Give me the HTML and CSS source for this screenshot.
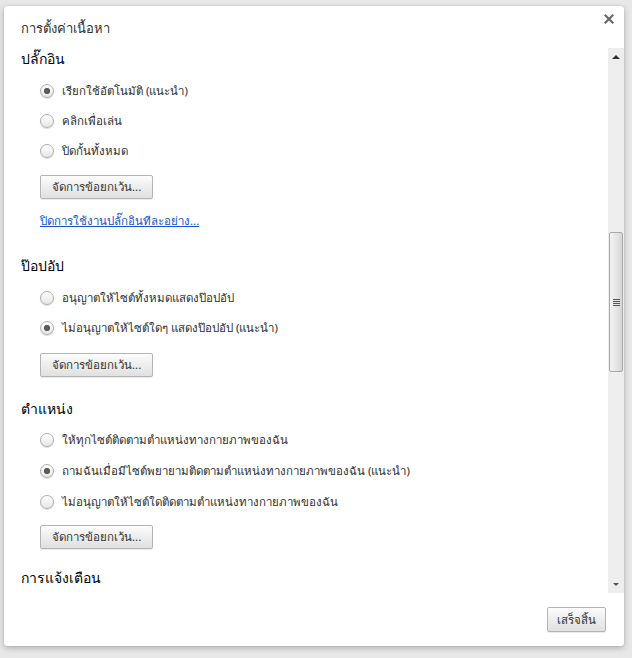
FILE: index.html
```html
<!DOCTYPE html>
<html lang="th">
<head>
<meta charset="utf-8">
<title>การตั้งค่าเนื้อหา</title>
<link rel="stylesheet" href="styles.css">
</head>
<body>
<div class="overlay">
  <div class="dialog">
    <div class="header">
      <span class="title">การตั้งค่าเนื้อหา</span>
      <svg class="close" width="10" height="10" viewBox="0 0 10 10"><path d="M1.5 1.5 L8.5 8.5 M8.5 1.5 L1.5 8.5" stroke="#6a6a6a" stroke-width="2.2" stroke-linecap="square"/></svg>
    </div>
    <div class="body">
      <div class="content">
        <h3 class="heading h-first">ปลั๊กอิน</h3>
        <div class="radios">
          <label class="radio-row"><span class="radio checked"></span><span>เรียกใช้อัตโนมัติ (แนะนำ)</span></label>
          <label class="radio-row"><span class="radio"></span><span>คลิกเพื่อเล่น</span></label>
          <label class="radio-row"><span class="radio"></span><span>ปิดกั้นทั้งหมด</span></label>
        </div>
        <div class="indent"><button class="btn">จัดการข้อยกเว้น...</button></div>
        <div class="indent link-row"><a class="link" href="#">ปิดการใช้งานปลั๊กอินทีละอย่าง...</a></div>

        <h3 class="heading h-second">ป๊อปอัป</h3>
        <div class="radios">
          <label class="radio-row"><span class="radio"></span><span>อนุญาตให้ไซต์ทั้งหมดแสดงป๊อปอัป</span></label>
          <label class="radio-row"><span class="radio checked"></span><span>ไม่อนุญาตให้ไซต์ใดๆ แสดงป๊อปอัป (แนะนำ)</span></label>
        </div>
        <div class="indent"><button class="btn btn-b2">จัดการข้อยกเว้น...</button></div>

        <h3 class="heading h-third">ตำแหน่ง</h3>
        <div class="radios radios-tall">
          <label class="radio-row"><span class="radio"></span><span>ให้ทุกไซต์ติดตามตำแหน่งทางกายภาพของฉัน</span></label>
          <label class="radio-row"><span class="radio checked"></span><span>ถามฉันเมื่อมีไซต์พยายามติดตามตำแหน่งทางกายภาพของฉัน (แนะนำ)</span></label>
          <label class="radio-row"><span class="radio"></span><span>ไม่อนุญาตให้ไซต์ใดติดตามตำแหน่งทางกายภาพของฉัน</span></label>
        </div>
        <div class="indent"><button class="btn btn-b3">จัดการข้อยกเว้น...</button></div>

        <h3 class="heading h-fourth">การแจ้งเตือน</h3>
      </div>
      <div class="scrollbar">
        <div class="sb-arrow"><span class="tri-up"></span></div>
        <div class="sb-track">
          <div class="sb-thumb"><span class="grip"></span></div>
        </div>
        <div class="sb-arrow"><span class="tri-down"></span></div>
      </div>
    </div>
    <div class="footer">
      <button class="btn btn-done">เสร็จสิ้น</button>
    </div>
  </div>
</div>
</body>
</html>
```

FILE: styles.css
```css
html, body {
  margin: 0;
  padding: 0;
}
body {
  background: #e8e8e8;
  font-family: Tahoma, "Noto Sans", "DejaVu Sans", sans-serif;
  font-size: 11.5px;
  color: #303030;
  width: 632px;
  height: 658px;
  overflow: hidden;
}
.overlay {
  padding: 6px 8px 0 4px;
}
.dialog {
  width: 620px;
  height: 640px;
  background: #fff;
  border-radius: 3px;
  box-shadow: 0 2px 6px rgba(0, 0, 0, 0.25), 0 0 1px rgba(0, 0, 0, 0.2);
  display: flex;
  flex-direction: column;
  overflow: hidden;
}
.header {
  height: 42px;
  box-sizing: border-box;
  padding: 14px 10px 0 17px;
  display: flex;
  justify-content: space-between;
  align-items: flex-start;
  flex: none;
}
.title {
  font-size: 13px;
  line-height: 16px;
  color: #333;
}
.close {
  margin-top: -6px;
}
.body {
  height: 545px;
  flex: none;
  display: flex;
}
.content {
  flex: 1;
  overflow: hidden;
  padding-left: 17px;
}
.heading {
  margin: 0;
  font-size: 14px;
  font-weight: normal;
  line-height: 20px;
  color: #000;
}
.h-first { margin-top: 1px; }
.h-second { margin-top: 25px; }
.h-third { margin-top: 22px; }
.h-fourth { margin-top: 19px; }
.radios {
  padding-left: 19px;
  margin-top: 7px;
}
.radios-tall {
  margin-top: 5px;
}
.radio-row {
  display: flex;
  align-items: center;
  height: 30px;
  line-height: 16px;
}
.radios-tall .radio-row {
  height: 31px;
}
.radio {
  width: 12px;
  height: 12px;
  border-radius: 50%;
  border: 1px solid #b0b0b0;
  background: linear-gradient(#ffffff, #e6e6e6);
  box-shadow: 0 1px 1px rgba(0, 0, 0, 0.14);
  margin-right: 8px;
  flex: none;
  display: flex;
  align-items: center;
  justify-content: center;
}
.radio.checked::after {
  content: "";
  width: 6px;
  height: 6px;
  border-radius: 50%;
  background: radial-gradient(#6a6a6a, #3a3a3a);
}
.indent {
  padding-left: 19px;
}
.btn {
  font-family: inherit;
  font-size: 11.5px;
  color: #333;
  height: 24px;
  padding: 0 11px;
  border: 1px solid #b4b4b4;
  border-radius: 2px;
  background: linear-gradient(#fdfdfd, #f0f0f0 40%, #e0e0e0);
  box-shadow: 0 1px 0 rgba(0, 0, 0, 0.08);
  margin-top: 9px;
  line-height: 20px;
}
.btn-b2 { margin-top: 10px; }
.btn-b3 { margin-top: 8px; }
.link-row {
  margin-top: 12px;
  line-height: 20px;
}
.link {
  color: #1155cc;
  text-decoration: underline;
}
.scrollbar {
  width: 16px;
  flex: none;
  background: #eeeeee;
  display: flex;
  flex-direction: column;
}
.sb-arrow {
  height: 17px;
  flex: none;
  display: flex;
  align-items: center;
  justify-content: center;
}
.tri-up {
  width: 0;
  height: 0;
  border-left: 4px solid transparent;
  border-right: 4px solid transparent;
  border-bottom: 4px solid #333;
}
.tri-down {
  width: 0;
  height: 0;
  border-left: 3px solid transparent;
  border-right: 3px solid transparent;
  border-top: 3px solid #555;
}
.sb-track {
  flex: 1;
}
.sb-thumb {
  margin: 167px 1px 0 1px;
  height: 140px;
  box-sizing: border-box;
  border: 1px solid #a8a8a8;
  border-radius: 2px;
  background: linear-gradient(to right, #f2f2f2, #e4e4e4 60%, #d4d4d4);
  display: flex;
  align-items: center;
  justify-content: center;
}
.grip {
  width: 7px;
  height: 7px;
  background: repeating-linear-gradient(#555 0, #555 1px, transparent 1px, transparent 2px);
}
.footer {
  flex: 1;
  display: flex;
  justify-content: flex-end;
  align-items: flex-start;
  padding: 14px 18px 0 0;
}
.btn-done {
  margin-top: 0;
  height: 25px;
  width: 59px;
  padding: 0;
}
```
